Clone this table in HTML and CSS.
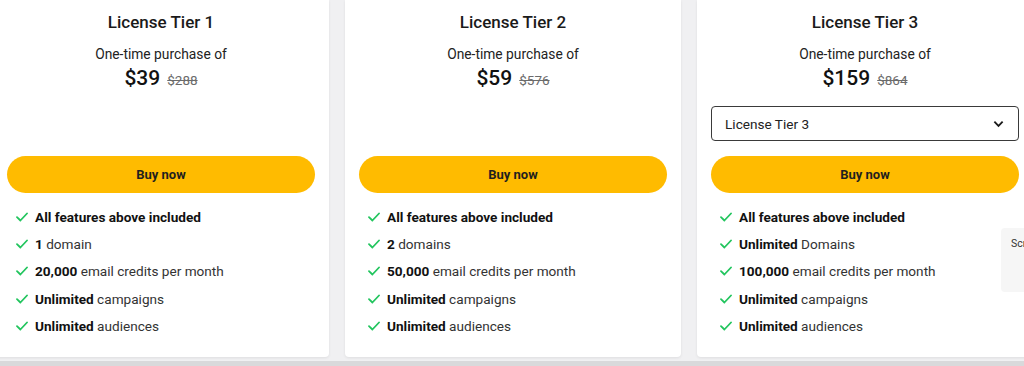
FILE: index.html
```html
<!DOCTYPE html>
<html lang="en">
<head>
  <meta charset="UTF-8">
  <meta name="viewport" content="width=device-width, initial-scale=1.0">
  <title>Pricing</title>
  <link rel="stylesheet" href="styles.css">
</head>
<body>
  <div class="pricing">
    <!-- Tier 1 -->
    <div class="card">
      <h2>License Tier 1</h2>
      <p class="sub">One-time purchase of</p>
      <div class="price"><span class="now">$39</span><s>$288</s></div>
      <div class="select-slot"></div>
      <button class="buy">Buy now</button>
      <ul class="features">
        <li><svg viewBox="0 0 12 10"><path d="M1 5.2l3.4 3.3L11 1.5"/></svg><span><b>All features above included</b></span></li>
        <li><svg viewBox="0 0 12 10"><path d="M1 5.2l3.4 3.3L11 1.5"/></svg><span><b>1</b> domain</span></li>
        <li><svg viewBox="0 0 12 10"><path d="M1 5.2l3.4 3.3L11 1.5"/></svg><span><b>20,000</b> email credits per month</span></li>
        <li><svg viewBox="0 0 12 10"><path d="M1 5.2l3.4 3.3L11 1.5"/></svg><span><b>Unlimited</b> campaigns</span></li>
        <li><svg viewBox="0 0 12 10"><path d="M1 5.2l3.4 3.3L11 1.5"/></svg><span><b>Unlimited</b> audiences</span></li>
      </ul>
    </div>

    <!-- Tier 2 -->
    <div class="card">
      <h2>License Tier 2</h2>
      <p class="sub">One-time purchase of</p>
      <div class="price"><span class="now">$59</span><s>$576</s></div>
      <div class="select-slot"></div>
      <button class="buy">Buy now</button>
      <ul class="features">
        <li><svg viewBox="0 0 12 10"><path d="M1 5.2l3.4 3.3L11 1.5"/></svg><span><b>All features above included</b></span></li>
        <li><svg viewBox="0 0 12 10"><path d="M1 5.2l3.4 3.3L11 1.5"/></svg><span><b>2</b> domains</span></li>
        <li><svg viewBox="0 0 12 10"><path d="M1 5.2l3.4 3.3L11 1.5"/></svg><span><b>50,000</b> email credits per month</span></li>
        <li><svg viewBox="0 0 12 10"><path d="M1 5.2l3.4 3.3L11 1.5"/></svg><span><b>Unlimited</b> campaigns</span></li>
        <li><svg viewBox="0 0 12 10"><path d="M1 5.2l3.4 3.3L11 1.5"/></svg><span><b>Unlimited</b> audiences</span></li>
      </ul>
    </div>

    <!-- Tier 3 -->
    <div class="card">
      <h2>License Tier 3</h2>
      <p class="sub">One-time purchase of</p>
      <div class="price"><span class="now">$159</span><s>$864</s></div>
      <div class="select-slot">
        <div class="select">
          <span>License Tier 3</span>
          <svg viewBox="0 0 12 8"><path d="M1.5 1.5l4.5 4.5 4.5-4.5"/></svg>
        </div>
      </div>
      <button class="buy">Buy now</button>
      <ul class="features">
        <li><svg viewBox="0 0 12 10"><path d="M1 5.2l3.4 3.3L11 1.5"/></svg><span><b>All features above included</b></span></li>
        <li><svg viewBox="0 0 12 10"><path d="M1 5.2l3.4 3.3L11 1.5"/></svg><span><b>Unlimited</b> Domains</span></li>
        <li><svg viewBox="0 0 12 10"><path d="M1 5.2l3.4 3.3L11 1.5"/></svg><span><b>100,000</b> email credits per month</span></li>
        <li><svg viewBox="0 0 12 10"><path d="M1 5.2l3.4 3.3L11 1.5"/></svg><span><b>Unlimited</b> campaigns</span></li>
        <li><svg viewBox="0 0 12 10"><path d="M1 5.2l3.4 3.3L11 1.5"/></svg><span><b>Unlimited</b> audiences</span></li>
      </ul>
    </div>
  </div>

  <div class="scroll-hint">Scr</div>
  <div class="bottom-bar"></div>
</body>
</html>
```

FILE: styles.css
```css
body, html {
  margin: 0;
  padding: 0;
}

body {
  font-family: Roboto, Arial, sans-serif;
  background: #f0f0f2;
  color: #1f1f1f;
  height: 366px;
  overflow: hidden;
  position: relative;
}

.pricing {
  display: flex;
  gap: 16px;
  margin-left: -7px;
}

.card {
  flex: 0 0 336px;
  box-sizing: border-box;
  height: 357px;
  background: #fff;
  border-radius: 0 0 4px 4px;
  box-shadow: 0 1px 3px rgba(0, 0, 0, 0.08);
  padding: 10px 14px 0;
  display: flex;
  flex-direction: column;
  text-align: center;
}

.card h2 {
  margin: 0;
  font-size: 17px;
  line-height: 24px;
  font-weight: 500;
  color: #1a1a1a;
}

.sub {
  margin: 10px 0 0;
  font-size: 13.8px;
  line-height: 20px;
  color: #222;
}

.price {
  display: flex;
  justify-content: center;
  align-items: baseline;
  gap: 7px;
  height: 28px;
}

.price .now {
  font-size: 21px;
  font-weight: 500;
  line-height: 28px;
  color: #111;
}

.price s {
  font-size: 13.5px;
  color: #6b6b6b;
}

.select-slot {
  height: 35px;
  margin-top: 14px;
}

.select {
  box-sizing: border-box;
  height: 35px;
  border: 1px solid #3a3a3a;
  border-radius: 4px;
  display: flex;
  align-items: center;
  justify-content: space-between;
  padding: 0 14px 0 13px;
  font-size: 13.6px;
  color: #222;
}

.select svg {
  width: 11px;
  height: 8px;
  fill: none;
  stroke: #1a1a1a;
  stroke-width: 2;
}

.buy {
  margin-top: 15px;
  height: 37px;
  border: none;
  border-radius: 19px;
  background: #ffbb00;
  font-family: Roboto, Arial, sans-serif;
  font-size: 13px;
  font-weight: 700;
  color: #1f1f1f;
  cursor: pointer;
}

.features {
  list-style: none;
  margin: 10px 0 0;
  padding: 0 0 0 9px;
  text-align: left;
}

.features li {
  display: flex;
  align-items: center;
  gap: 7px;
  height: 27.3px;
  font-size: 13.6px;
  color: #333;
}

.features li b {
  font-weight: 700;
  color: #111;
}

.features svg {
  width: 12px;
  height: 10px;
  fill: none;
  stroke: #22c55e;
  stroke-width: 1.8;
  stroke-linecap: round;
  stroke-linejoin: round;
}

.scroll-hint {
  position: absolute;
  left: 1001px;
  top: 228px;
  width: 23px;
  height: 64px;
  box-sizing: border-box;
  padding: 9px 0 0 10px;
  background: #f6f6f6;
  border-radius: 4px 0 0 4px;
  font-size: 10.5px;
  color: #333;
  overflow: hidden;
  white-space: nowrap;
}

.bottom-bar {
  position: absolute;
  left: 0;
  right: 0;
  bottom: 0;
  height: 5px;
  background: #d9d9db;
}
```
